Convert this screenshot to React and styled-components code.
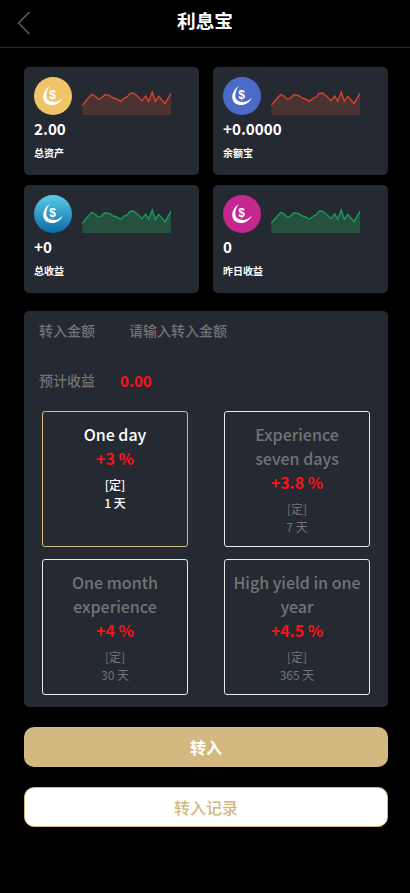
import React from 'react';
import styled, { createGlobalStyle } from 'styled-components';

const GlobalStyle = createGlobalStyle`
  html, body {
    margin: 0;
    padding: 0;
    background: #000;
  }
  body {
    font-family: 'Noto Sans CJK SC', 'Noto Sans', sans-serif;
  }
`;

const stats = [
  { value: '2.00', label: '总资产', icon: 'linear-gradient(#f0c468, #f0c468)', up: false },
  { value: '+0.0000', label: '余额宝', icon: 'linear-gradient(#4a6cc8, #4a6cc8)', up: false },
  { value: '+0', label: '总收益', icon: 'linear-gradient(#5ccbe6, #0a6ba6)', up: true },
  { value: '0', label: '昨日收益', icon: 'linear-gradient(#c4278e, #c4278e)', up: true },
];

const plans = [
  { name: 'One day', rate: '+3 %', days: '1 天', active: true },
  { name: 'Experience seven days', rate: '+3.8 %', days: '7 天' },
  { name: 'One month experience', rate: '+4 %', days: '30 天' },
  { name: 'High yield in one year', rate: '+4.5 %', days: '365 天' },
];

const LINE =
  'M0.3 15.3 L4.7 10 L9.7 4.3 L13 6 L16.3 9.3 L19 8.3 L23 4.7 L27.3 5.3 L31.3 8 L34.7 9 L38.7 11.3 L42.3 8 L45.3 7 L48 3.3 L51.3 3 L55.3 6 L60 10.7 L63.7 6 L66.7 11.3 L70.3 2 L73.3 11.3 L76.7 6.3 L83 13.7 L89 3.3';

const Spark = ({ up }) => {
  const color = up ? '#169a5a' : '#d8412c';
  const fill = up ? '#27513f' : '#4b3233';
  return (
    <Chart viewBox="0 0 89 25" aria-hidden="true">
      <path d={`${LINE} L89 25 L0.3 25 Z`} fill={fill} />
      <path d={LINE} fill="none" stroke={color} strokeWidth="1.4" />
    </Chart>
  );
};

const CoinIcon = () => (
  <svg width="38" height="38" viewBox="0 0 38 38" aria-hidden="true">
    <path d="M16 9 C11 12 9 17 9.300 21 C10 26 14 28 18 28 C23 28 27 25 28.700 20.700 C26 23.500 22.500 25.300 19 25 C15 24.700 12.300 22 12.300 19 C12.300 15 13.500 12 16 9 Z" fill="#fff" />
    <text x="18.700" y="22.300" textAnchor="middle" fontSize="12" fontWeight="700" fill="#fff" fontFamily="'Liberation Sans', sans-serif">$</text>
  </svg>
);

export default function App() {
  return (
    <Page>
      <GlobalStyle />
      <Header>
        <BackIcon width="14" height="24" viewBox="0 0 14 24" aria-hidden="true">
          <path d="M12.500 1 L1.500 12 L12.500 23" fill="none" stroke="#66635c" strokeWidth="1.300" />
        </BackIcon>
        <Title>利息宝</Title>
      </Header>
      <Content>
        <StatGrid>
          {stats.map((s) => (
            <StatCard key={s.label}>
              <StatTop>
                <Coin $bg={s.icon}>
                  <CoinIcon />
                </Coin>
                <Spark up={s.up} />
              </StatTop>
              <StatValue>{s.value}</StatValue>
              <StatLabel>{s.label}</StatLabel>
            </StatCard>
          ))}
        </StatGrid>
        <Panel>
          <FormRow>
            <FieldLabel>转入金额</FieldLabel>
            <AmountInput placeholder="请输入转入金额" />
          </FormRow>
          <EarnRow>
            <FieldLabel>预计收益</FieldLabel>
            <Earn>0.00</Earn>
          </EarnRow>
          <PlanGrid>
            {plans.map((p) => (
              <Plan key={p.name} $active={p.active}>
                <PlanName>{p.name}</PlanName>
                <PlanRate>{p.rate}</PlanRate>
                <PlanMeta>[定]</PlanMeta>
                <PlanMeta>{p.days}</PlanMeta>
              </Plan>
            ))}
          </PlanGrid>
        </Panel>
        <PrimaryButton>转入</PrimaryButton>
        <SecondaryButton>转入记录</SecondaryButton>
      </Content>
    </Page>
  );
}

const Page = styled.div`
  width: 410px;
  min-height: 893px;
  background: #000;
`;

const Header = styled.header`
  position: relative;
  box-sizing: border-box;
  height: 48px;
  padding-bottom: 8px;
  display: flex;
  align-items: center;
  justify-content: center;
  border-bottom: 1px solid #2b2b2b;
`;

const BackIcon = styled.svg`
  position: absolute;
  left: 17px;
  top: 11px;
`;

const Title = styled.h1`
  margin: 0;
  font-size: 18.7px;
  font-weight: 700;
  line-height: 26px;
  color: #fff;
`;

const Content = styled.main`
  padding: 19px 22px 0 24px;
`;

const StatGrid = styled.section`
  display: grid;
  grid-template-columns: 175px 175px;
  grid-auto-rows: 108px;
  column-gap: 14px;
  row-gap: 10px;
`;

const StatCard = styled.div`
  box-sizing: border-box;
  padding: 10px;
  background: #252932;
  border-radius: 5px;
`;

const StatTop = styled.div`
  display: flex;
  align-items: flex-end;
  gap: 10px;
`;

const Coin = styled.div`
  width: 38px;
  height: 38px;
  border-radius: 50%;
  background: ${(p) => p.$bg};
  flex: none;
`;

const Chart = styled.svg`
  display: block;
  width: 89px;
  height: 25px;
`;

const StatValue = styled.div`
  margin-top: 2px;
  font-size: 15.2px;
  font-weight: 700;
  line-height: 23px;
  color: #fff;
`;

const StatLabel = styled.div`
  margin-top: 5px;
  font-size: 10px;
  font-weight: 700;
  line-height: 15px;
  color: #fff;
`;

const Panel = styled.section`
  box-sizing: border-box;
  height: 396px;
  margin-top: 18px;
  padding: 7px 18px 0;
  background: #252932;
  border-radius: 5px;
`;

const FormRow = styled.div`
  display: flex;
  align-items: center;
  height: 24px;
  margin-left: -3px;
`;

const FieldLabel = styled.span`
  width: 90px;
  flex: none;
  font-size: 14px;
  font-weight: 500;
  color: #737373;
`;

const AmountInput = styled.input`
  width: 200px;
  padding: 0;
  border: 0;
  outline: 0;
  background: transparent;
  font-family: inherit;
  font-size: 14px;
  font-weight: 500;
  color: #fff;

  &::placeholder {
    color: #737373;
    opacity: 1;
  }
`;

const EarnRow = styled.div`
  display: flex;
  align-items: center;
  height: 24px;
  margin: 26px 0 0 -3px;

  ${FieldLabel} {
    width: 81px;
  }
`;

const Earn = styled.span`
  font-size: 15.2px;
  font-weight: 700;
  color: #fb1216;
`;

const PlanGrid = styled.div`
  display: grid;
  grid-template-columns: 146px 146px;
  grid-auto-rows: 136px;
  column-gap: 36px;
  row-gap: 12px;
  margin-top: 19px;
`;

const Plan = styled.div`
  box-sizing: border-box;
  padding: 10px 8px 0;
  text-align: center;
  border: 1px solid ${(p) => (p.$active ? '#d4b97e' : '#e8e8e8')};
  border-radius: 3px;
  color: ${(p) => (p.$active ? '#fff' : '#737373')};
  font-weight: ${(p) => (p.$active ? 500 : 400)};
`;

const PlanName = styled.div`
  font-size: 16px;
  font-weight: 500;
  line-height: 24px;
`;

const PlanRate = styled.div`
  margin-bottom: 6px;
  font-size: 16px;
  font-weight: 700;
  line-height: 24px;
  color: #fb1216;
`;

const PlanMeta = styled.div`
  font-size: 12px;
  line-height: 18px;
`;

const PrimaryButton = styled.button`
  display: block;
  width: 364px;
  height: 40px;
  margin-top: 20px;
  padding: 0;
  border: 0;
  border-radius: 10px;
  background: #d3b97f;
  font-family: inherit;
  font-size: 16px;
  font-weight: 700;
  color: #fff;
`;

const SecondaryButton = styled.button`
  display: block;
  box-sizing: border-box;
  width: 364px;
  height: 40px;
  margin-top: 20px;
  padding: 0;
  border: 1px solid #d3b97f;
  border-radius: 10px;
  background: #fff;
  font-family: inherit;
  font-size: 16px;
  font-weight: 500;
  color: #d3b97f;
`;
